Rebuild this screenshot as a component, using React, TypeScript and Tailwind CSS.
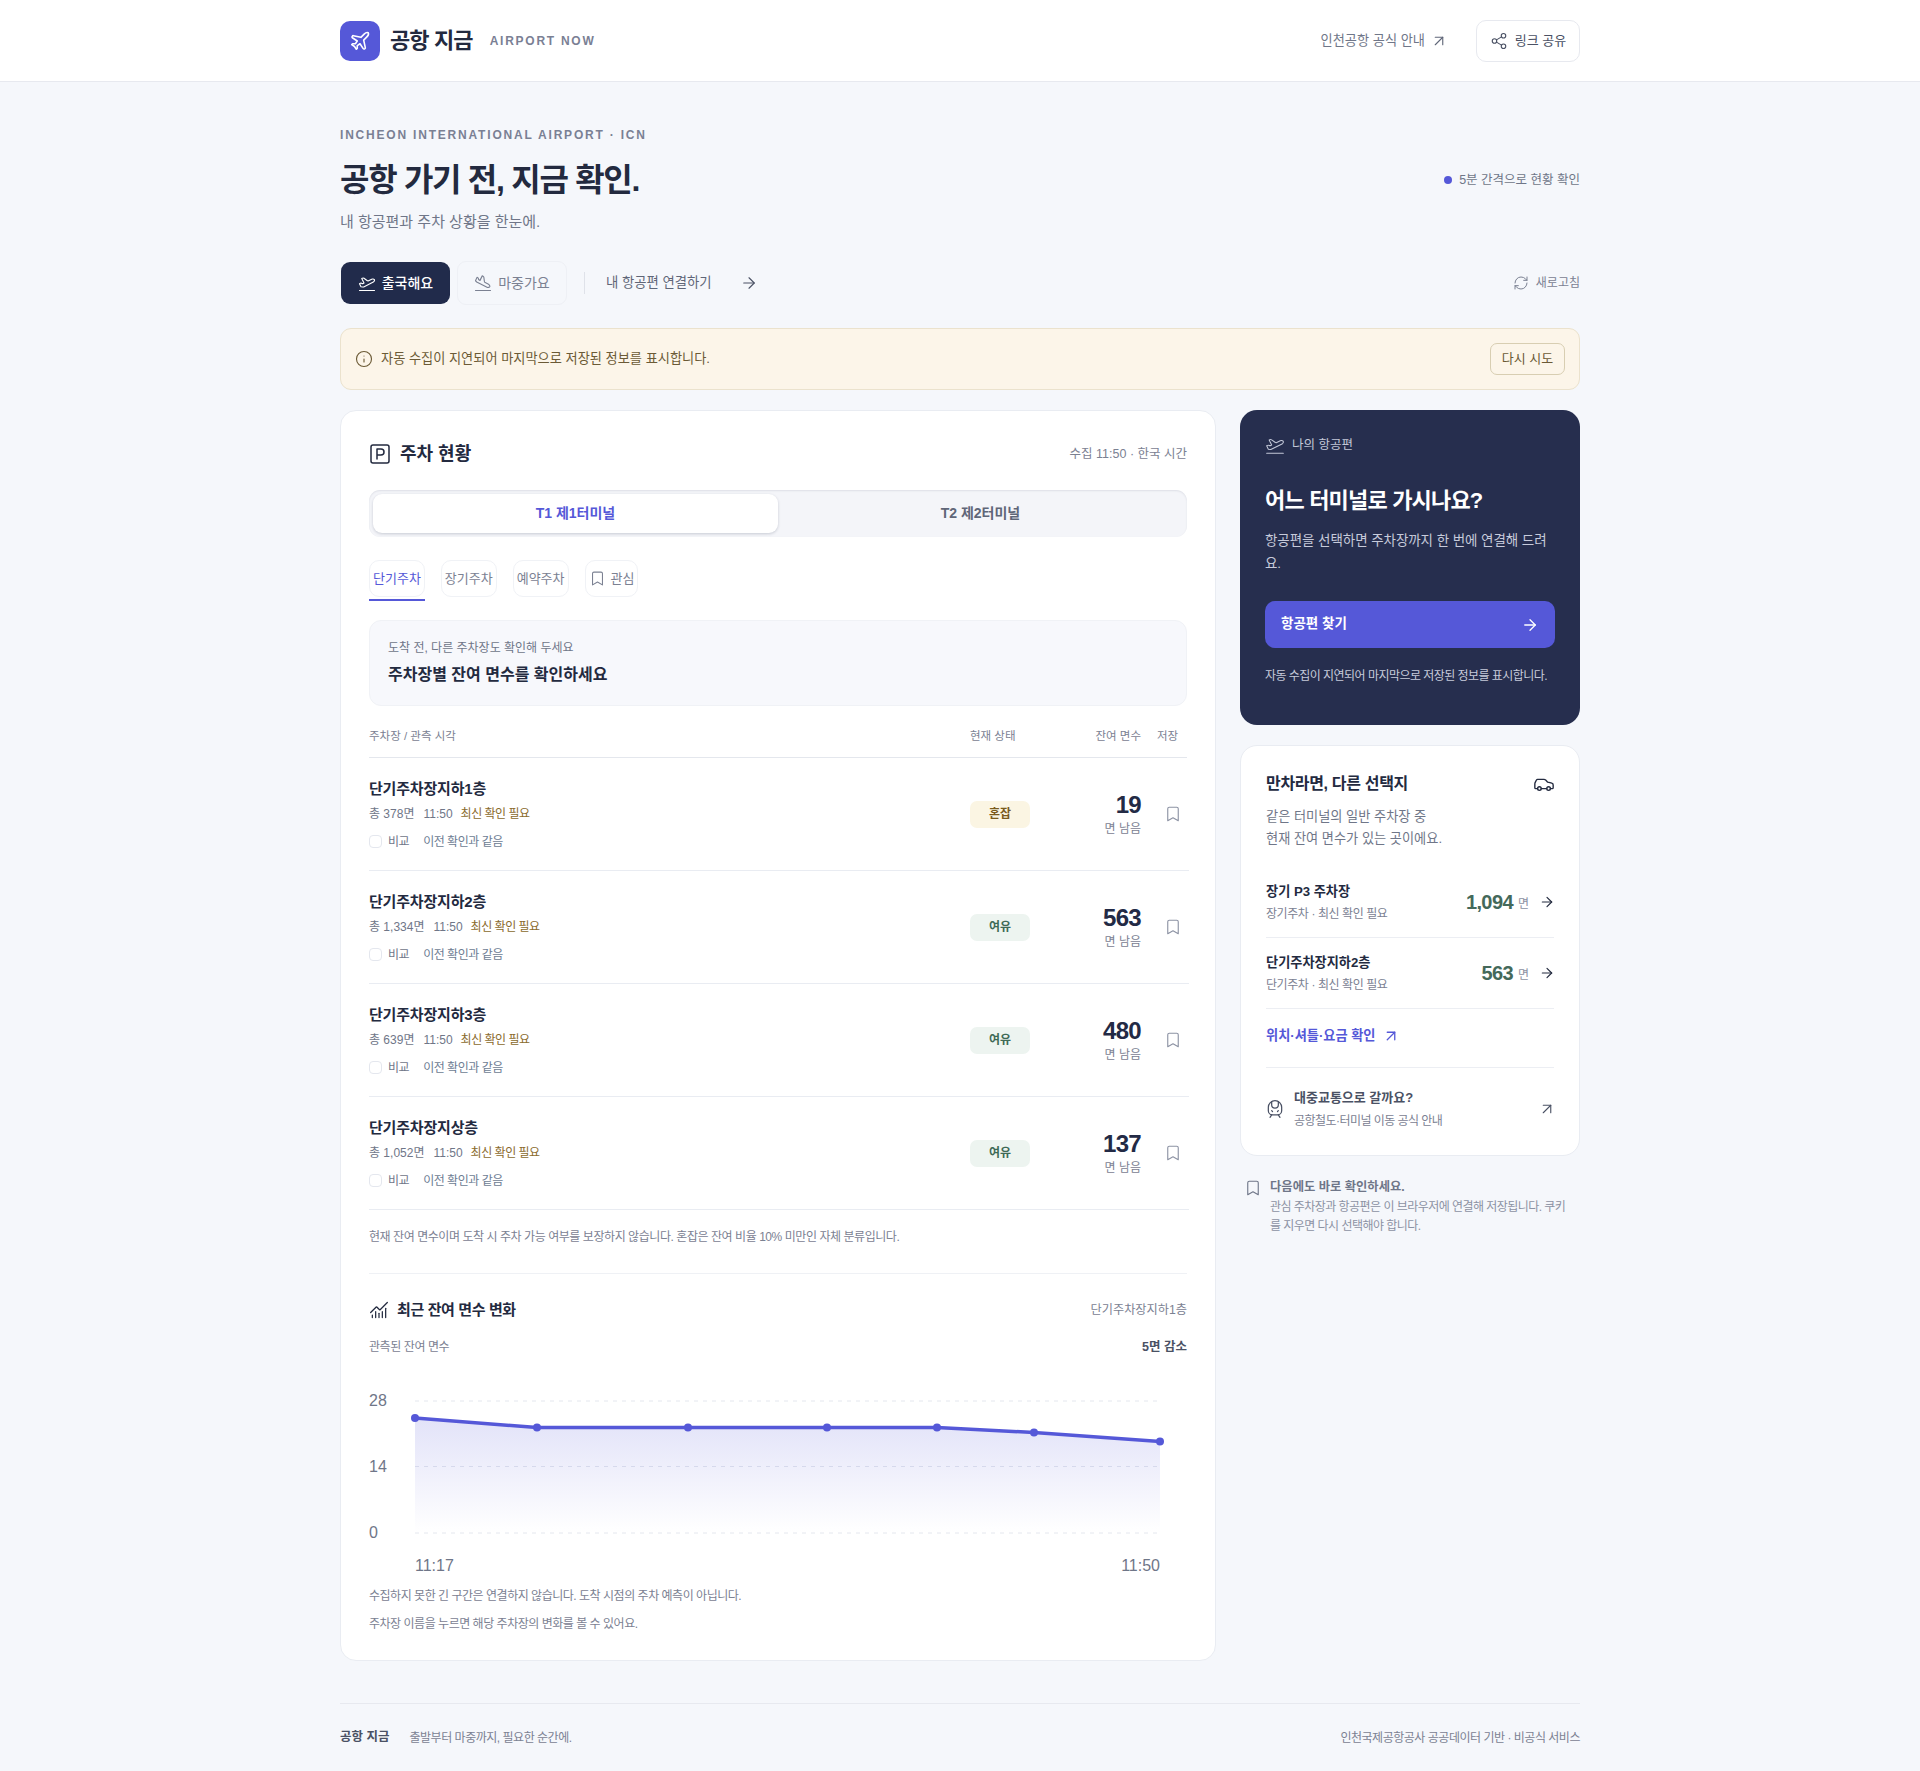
import React from "react";
import {
  ArrowRight,
  ArrowUpRight,
  Bookmark,
  Car,
  ChartNoAxesCombined,
  Info,
  Plane,
  PlaneLanding,
  PlaneTakeoff,
  RefreshCw,
  Share2,
  SquareParking,
  TrainFront,
} from "lucide-react";

const rows = [
  { name: "단기주차장지하1층", total: "총 378면", status: "혼잡", left: "19" },
  { name: "단기주차장지하2층", total: "총 1,334면", status: "여유", left: "563" },
  { name: "단기주차장지하3층", total: "총 639면", status: "여유", left: "480" },
  { name: "단기주차장지상층", total: "총 1,052면", status: "여유", left: "137" },
];

const points = [
  [46, 38],
  [168, 47.5],
  [319, 47.5],
  [458, 47.5],
  [568, 47.5],
  [665, 52.5],
  [791, 61.5],
];

function Row({ r }: { r: (typeof rows)[number] }) {
  const busy = r.status === "혼잡";
  return (
    <div className="-mr-[2px] grid h-[113px] grid-cols-[601px_90px_81px_48px] items-center border-b border-[#e9ecf2]">
      <div className="flex flex-col pt-[2px]">
        <div className="text-[15px] leading-[20px] font-semibold tracking-[-0.012em] text-[#232a3f]">{r.name}</div>
        <div className="mt-[5px] flex h-[20px] items-center text-[12px] text-[#6f7688]">
          <span>{r.total}</span>
          <span className="ml-[9px]">11:50</span>
          <span className="ml-[8px] tracking-[-0.04em] text-[#8a6a2c]">최신 확인 필요</span>
        </div>
        <div className="mt-[8px] flex h-[20px] items-center text-[12px] tracking-[-0.04em] text-[#6f7688]">
          <span className="h-[13px] w-[13px] rounded-[4px] border border-[#e4e7ee] bg-white" />
          <span className="ml-[6px]">비교</span>
          <span className="ml-[14px] text-[#6d7c93]">이전 확인과 같음</span>
        </div>
      </div>
      <div>
        <span
          className={`flex h-[27px] w-[60px] items-center justify-center rounded-[7px] text-[12px] font-semibold ${
            busy ? "bg-[#fbf5e3] text-[#7a5b1d]" : "bg-[#edf4f0] text-[#3f6a56]"
          }`}
        >
          {r.status}
        </span>
      </div>
      <div className="flex flex-col items-end">
        <div className="text-[24px] leading-[30px] font-bold tracking-[-0.03em] text-[#232a45]">{r.left}</div>
        <div className="text-[12px] leading-[18px] text-[#7b8192]">면 남음</div>
      </div>
      <div className="pl-[23px]">
        <Bookmark size={18} strokeWidth={1.5} className="text-[#8c92a3]" />
      </div>
    </div>
  );
}

function Tab({ children, active }: { children: React.ReactNode; active?: boolean }) {
  return (
    <div className="relative">
      <div
        className={`flex h-[37px] items-center gap-[5px] rounded-[10px] border border-[#f0f2f6] px-[3px] text-[13px] ${
          active ? "text-[#5558d8]" : "text-[#7b8192]"
        }`}
      >
        {children}
      </div>
      {active && <div className="absolute top-[39px] right-0 left-0 h-[2px] bg-[#5558d8]" />}
    </div>
  );
}

function Alt({ title, sub, num }: { title: string; sub: string; num: string }) {
  return (
    <div className="flex h-[71px] items-center justify-between border-b border-[#eceef3]">
      <div>
        <div className="text-[13.2px] leading-[20px] font-semibold text-[#232a3f]">{title}</div>
        <div className="mt-[3px] text-[12px] leading-[18px] tracking-[-0.035em] text-[#7b8192]">{sub}</div>
      </div>
      <div className="-mr-[1px] flex items-center">
        <span className="text-[20px] leading-[24px] font-bold tracking-[-0.03em] text-[#44695a]">{num}</span>
        <span className="mt-[3px] ml-[5px] text-[12px] text-[#8c92a3]">면</span>
        <ArrowRight size={16} strokeWidth={1.75} className="ml-[10px] text-[#232a3f]" />
      </div>
    </div>
  );
}

export default function App() {
  const line = points.map((p) => p.join(",")).join(" ");
  const area = `M46,153 L${line.replace(/ /g, " L")} L791,153 Z`;
  const fontFamily = '"Liberation Sans", "Noto Sans CJK KR", sans-serif';
  return (
    <div className="min-h-[1771px] bg-[#f5f7fb] text-[#232a3f]" style={{ fontFamily }}>
      <header className="h-[82px] border-b border-[#e7e9ef] bg-white">
        <div className="mx-auto flex h-[81px] w-[1240px] items-center justify-between">
          <div className="flex items-center">
            <div className="flex h-[40px] w-[40px] items-center justify-center rounded-[10px] bg-[#5558d8]">
              <Plane size={22} strokeWidth={1.75} className="text-white" />
            </div>
            <span className="ml-[10px] text-[22px] font-bold tracking-[-0.04em] text-[#232a3f]">공항 지금</span>
            <span className="ml-[17px] text-[12px] font-bold tracking-[0.145em] text-[#7a8094]">AIRPORT NOW</span>
          </div>
          <div className="flex items-center">
            <span className="text-[13.2px] text-[#6f7688]">인천공항 공식 안내</span>
            <ArrowUpRight size={18} strokeWidth={1.5} className="ml-[5px] text-[#5f6678]" />
            <div className="ml-[28px] flex h-[42px] w-[104px] items-center justify-center gap-[7px] rounded-[10px] border border-[#e7e9ef] bg-white text-[13px] text-[#4a5164]">
              <Share2 size={18} strokeWidth={1.5} />
              링크 공유
            </div>
          </div>
        </div>
      </header>

      <main className="mx-auto w-[1240px]">
        <div className="pt-[46px] text-[12px] leading-[14px] font-bold tracking-[0.15em] text-[#7a8094]">
          INCHEON INTERNATIONAL AIRPORT · ICN
        </div>
        <div className="flex items-center justify-between pt-[15px]">
          <h1 className="text-[32px] leading-[46px] font-bold tracking-[-0.04em] text-[#232a3f]">공항 가기 전, 지금 확인.</h1>
          <div className="flex items-center gap-[7px] text-[12.5px] text-[#6f7688]">
            <span className="h-[8px] w-[8px] rounded-full bg-[#5558d8]" />
            5분 간격으로 현황 확인
          </div>
        </div>
        <p className="mt-[8px] text-[15px] leading-[22px] text-[#6f7688]">내 항공편과 주차 상황을 한눈에.</p>

        <div className="mt-[28px] flex h-[44px] items-center justify-between">
          <div className="flex items-center">
            <div className="ml-[1px] flex h-[42px] w-[109px] items-center justify-center gap-[6px] rounded-[9px] bg-[#212b4b] text-[14px] font-medium text-white">
              <PlaneTakeoff size={18} strokeWidth={1.5} />
              출국해요
            </div>
            <div className="ml-[7px] flex h-[44px] w-[110px] items-center justify-center gap-[6px] rounded-[9px] border border-[#eef0f5] text-[14px] text-[#7b8192]">
              <PlaneLanding size={18} strokeWidth={1.5} />
              마중가요
            </div>
            <div className="ml-[17px] h-[22px] w-px bg-[#dfe2e9]" />
            <span className="ml-[21px] text-[13.35px] text-[#5f6678]">내 항공편 연결하기</span>
            <ArrowRight size={18} strokeWidth={1.5} className="ml-[28px] text-[#4a5164]" />
          </div>
          <div className="flex items-center gap-[7px] text-[12px] text-[#7b8192]">
            <RefreshCw size={16} strokeWidth={1.5} />
            새로고침
          </div>
        </div>

        <div className="mt-[23px] flex h-[62px] items-center justify-between rounded-[11px] border border-[#ebe2cd] bg-[#fcf5e9] pr-[14px] pl-[14px]">
          <div className="flex items-center gap-[8px] text-[13.2px] text-[#6b5a36]">
            <Info size={18} strokeWidth={1.5} />
            자동 수집이 지연되어 마지막으로 저장된 정보를 표시합니다.
          </div>
          <div className="flex h-[32px] w-[75px] items-center justify-center rounded-[7px] border border-[#d8ceb2] text-[13px] text-[#6b5a36]">
            다시 시도
          </div>
        </div>

        <div className="mt-[20px] flex items-start justify-between">
          <section className="h-[1251px] w-[876px] rounded-[16px] border border-[#e9ecf2] bg-white p-[28px]">
            <div className="flex h-[30px] items-center justify-between">
              <div className="flex items-center gap-[8px]">
                <SquareParking size={24} strokeWidth={1.5} className="-ml-[1px] text-[#232a3f]" />
                <span className="text-[18px] font-bold text-[#232a3f]">주차 현황</span>
              </div>
              <span className="text-[12.5px] text-[#7b8192]">수집 11:50 · 한국 시간</span>
            </div>

            <div className="mt-[21px] grid h-[47px] grid-cols-2 rounded-[11px] bg-[#f4f5f9] p-[4px] shadow-[inset_0_1px_2px_rgba(30,40,70,0.1)]">
              <div className="flex items-center justify-center rounded-[9px] bg-white text-[14px] font-bold text-[#5558d8] shadow-[0_1px_3px_rgba(30,40,70,0.2)]">
                T1 제1터미널
              </div>
              <div className="flex items-center justify-center text-[14px] font-semibold text-[#5f6678]">T2 제2터미널</div>
            </div>

            <div className="mt-[23px] flex gap-[16px]">
              <Tab active>단기주차</Tab>
              <Tab>장기주차</Tab>
              <Tab>예약주차</Tab>
              <Tab>
                <Bookmark size={17} strokeWidth={1.5} />
                관심
              </Tab>
            </div>

            <div className="mt-[23px] flex h-[86px] flex-col justify-center rounded-[12px] border border-[#f0f2f6] bg-[#f7f8fc] px-[18px]">
              <div className="text-[12px] leading-[18px] text-[#6f7688]">도착 전, 다른 주차장도 확인해 두세요</div>
              <div className="mt-[6px] text-[16px] leading-[24px] font-bold text-[#232a3f]">주차장별 잔여 면수를 확인하세요</div>
            </div>

            <div className="mt-[11px] grid h-[41px] grid-cols-[601px_90px_81px_46px] items-center border-b border-[#e4e7ed] text-[11.5px] text-[#7b8192]">
              <span>주차장 / 관측 시각</span>
              <span>현재 상태</span>
              <span className="text-right">잔여 면수</span>
              <span className="pl-[16px]">저장</span>
            </div>

            {rows.map((r) => (
              <Row key={r.name} r={r} />
            ))}

            <p className="mt-[17px] text-[12px] leading-[20px] tracking-[-0.037em] text-[#7b8192]">
              현재 잔여 면수이며 도착 시 주차 가능 여부를 보장하지 않습니다. 혼잡은 잔여 비율 10% 미만인 자체 분류입니다.
            </p>

            <div className="mt-[26px] border-t border-[#eff1f5] pt-[24px]">
              <div className="flex h-[24px] items-center justify-between">
                <div className="flex items-center gap-[8px]">
                  <ChartNoAxesCombined size={20} strokeWidth={1.5} className="text-[#232a3f]" />
                  <span className="text-[15px] font-bold tracking-[-0.025em] text-[#232a3f]">최근 잔여 면수 변화</span>
                </div>
                <span className="text-[12.2px] text-[#7b8192]">단기주차장지하1층</span>
              </div>
              <div className="mt-[15px] flex h-[20px] items-center justify-between">
                <span className="text-[12px] tracking-[-0.035em] text-[#7b8192]">관측된 잔여 면수</span>
                <span className="text-[12.5px] font-bold text-[#4a5164]">5면 감소</span>
              </div>

              <svg width="818" height="200" viewBox="0 0 818 200" className="mt-[23px] block">
                <defs>
                  <linearGradient id="fillArea" x1="0" y1="0" x2="0" y2="1">
                    <stop offset="0" stopColor="#5558d8" stopOpacity="0.17" />
                    <stop offset="1" stopColor="#5558d8" stopOpacity="0" />
                  </linearGradient>
                </defs>
                {[21, 86.5, 153].map((y) => (
                  <line key={y} x1="46" x2="791" y1={y} y2={y} stroke="#e4e7ee" strokeDasharray="4 5" />
                ))}
                <path d={area} fill="url(#fillArea)" />
                <polyline points={line} fill="none" stroke="#5558d8" strokeWidth="3.5" strokeLinejoin="round" />
                {points.map((p) => (
                  <circle key={p[0]} cx={p[0]} cy={p[1]} r="4" fill="#5558d8" />
                ))}
                <g fill="#6f7688" fontSize="16">
                  <text x="0" y="26">28</text>
                  <text x="0" y="92">14</text>
                  <text x="0" y="158">0</text>
                  <text x="46" y="191">11:17</text>
                  <text x="791" y="191" textAnchor="end">11:50</text>
                </g>
              </svg>

              <p className="mt-[6px] text-[12px] leading-[20px] tracking-[-0.04em] text-[#7b8192]">
                수집하지 못한 긴 구간은 연결하지 않습니다. 도착 시점의 주차 예측이 아닙니다.
              </p>
              <p className="mt-[8px] text-[12px] leading-[20px] tracking-[-0.04em] text-[#7b8192]">
                주차장 이름을 누르면 해당 주차장의 변화를 볼 수 있어요.
              </p>
            </div>
          </section>

          <aside className="w-[340px]">
            <div className="h-[315px] rounded-[17px] bg-[#262e4e] px-[25px] pt-[25px]">
              <div className="flex h-[20px] items-center gap-[7px] text-[12.5px] text-[#c3c8d8]">
                <PlaneTakeoff size={20} strokeWidth={1.25} />
                나의 항공편
              </div>
              <h2 className="mt-[30px] text-[22px] leading-[32px] font-bold tracking-[-0.037em] text-white">어느 터미널로 가시나요?</h2>
              <p className="mt-[12px] text-[13.5px] leading-[23px] tracking-[-0.005em] text-[#c7cbdb]">항공편을 선택하면 주차장까지 한 번에 연결해 드려요.</p>
              <div className="mt-[26px] flex h-[47px] items-center justify-between rounded-[10px] bg-[#5558d8] px-[16px] text-[13.5px] font-bold text-white">
                항공편 찾기
                <ArrowRight size={18} strokeWidth={1.75} />
              </div>
              <p className="mt-[19px] text-[12px] leading-[18px] tracking-[-0.045em] whitespace-nowrap text-[#c7cbdb]">
                자동 수집이 지연되어 마지막으로 저장된 정보를 표시합니다.
              </p>
            </div>

            <div className="mt-[20px] h-[411px] rounded-[17px] border border-[#e9ecf2] bg-white px-[25px] pt-[26px]">
              <div className="flex h-[24px] items-center justify-between">
                <span className="text-[16px] font-bold tracking-[-0.02em] text-[#232a3f]">만차라면, 다른 선택지</span>
                <Car size={22} strokeWidth={1.5} className="-mr-[1px] text-[#232a3f]" />
              </div>
              <p className="mt-[10px] text-[13.2px] leading-[22px] text-[#6f7688]">
                같은 터미널의 일반 주차장 중
                <br />
                현재 잔여 면수가 있는 곳이에요.
              </p>
              <div className="mt-[17px]">
                <Alt title="장기 P3 주차장" sub="장기주차 · 최신 확인 필요" num="1,094" />
                <Alt title="단기주차장지하2층" sub="단기주차 · 최신 확인 필요" num="563" />
              </div>
              <div className="flex h-[59px] items-center gap-[6px] border-b border-[#eceef3] pb-[5px] text-[13.2px] font-semibold text-[#5558d8]">
                위치·셔틀·요금 확인
                <ArrowUpRight size={18} strokeWidth={1.75} />
              </div>
              <div className="flex h-[82px] items-center">
                <TrainFront size={20} strokeWidth={1.5} className="-ml-[1px] text-[#4a5164]" />
                <div className="ml-[9px] flex-1">
                  <div className="text-[13px] leading-[20px] font-semibold text-[#4a5164]">대중교통으로 갈까요?</div>
                  <div className="mt-[4px] text-[12px] leading-[18px] tracking-[-0.045em] text-[#7b8192]">공항철도·터미널 이동 공식 안내</div>
                </div>
                <ArrowUpRight size={18} strokeWidth={1.5} className="-mr-[2px] text-[#4a5164]" />
              </div>
            </div>

            <div className="mt-[22px] flex pr-[10px] pl-[4px]">
              <Bookmark size={18} strokeWidth={1.5} className="mt-[1px] shrink-0 text-[#6f7688]" />
              <div className="ml-[8px]">
                <div className="text-[12.3px] leading-[19px] font-semibold text-[#6f7688]">다음에도 바로 확인하세요.</div>
                <p className="mt-[1px] text-[12px] leading-[19px] tracking-[-0.045em] text-[#8c92a3]">
                  관심 주차장과 항공편은 이 브라우저에 연결해 저장됩니다. 쿠키를 지우면 다시 선택해야 합니다.
                </p>
              </div>
            </div>
          </aside>
        </div>

        <footer className="mt-[42px] flex h-[68px] items-center justify-between border-t border-[#e7e9ef]">
          <div className="flex items-center gap-[20px]">
            <span className="text-[12.5px] font-bold text-[#4a5164]">공항 지금</span>
            <span className="text-[12px] tracking-[-0.04em] text-[#7b8192]">출발부터 마중까지, 필요한 순간에.</span>
          </div>
          <span className="text-[12px] tracking-[-0.04em] text-[#7b8192]">인천국제공항공사 공공데이터 기반 · 비공식 서비스</span>
        </footer>
      </main>
    </div>
  );
}
